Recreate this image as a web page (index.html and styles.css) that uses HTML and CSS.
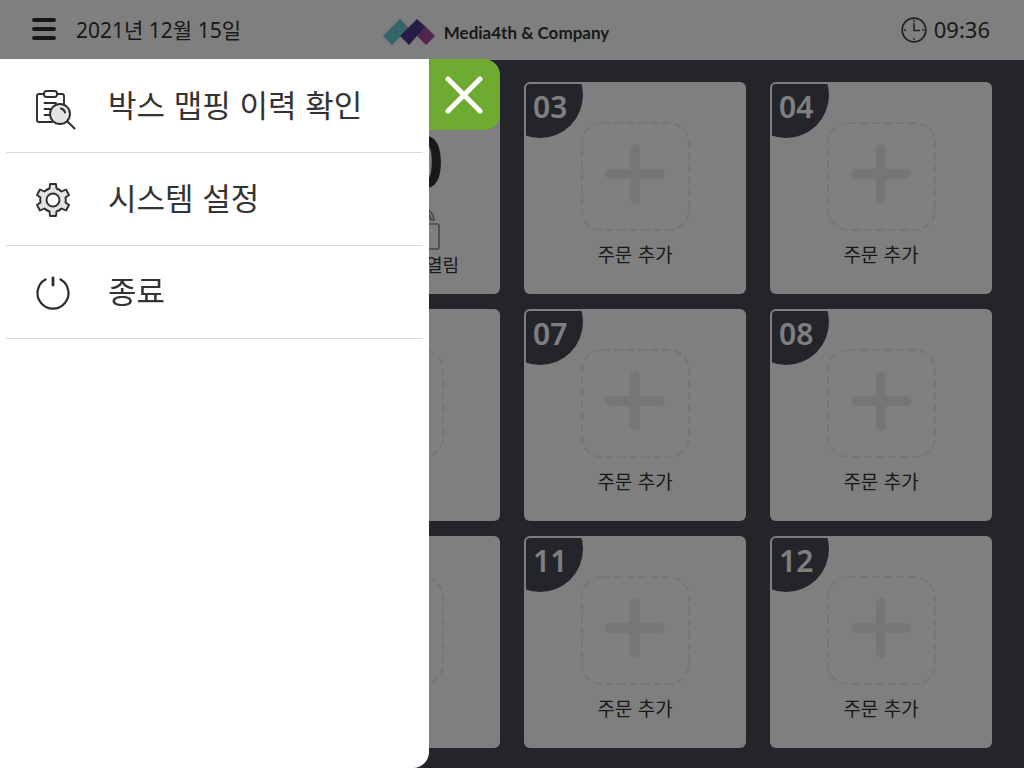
FILE: index.html
```html
<!DOCTYPE html>
<html lang="ko">
<head>
<meta charset="utf-8">
<meta name="viewport" content="width=device-width, initial-scale=1">
<title>Media4th &amp; Company</title>
<link rel="stylesheet" href="styles.css">
</head>
<body>
<svg class="symbols" aria-hidden="true">
  <symbol id="plus" viewBox="0 0 110 110">
    <rect x="2" y="1" width="107" height="107" rx="20" fill="none" stroke="#ebebeb" stroke-width="2" stroke-dasharray="8 4"/>
    <path d="M55 27v50M30 52h50" fill="none" stroke="#ededed" stroke-width="10" stroke-linecap="round"/>
  </symbol>
</svg>

<header class="topbar">
  <div class="topbar-left">
    <button class="menu-button" type="button" aria-label="메뉴">
      <svg width="24" height="22" viewBox="0 0 24 22"><path d="M2 2h20M2 11h20M2 20h20" stroke="#2f2f2f" stroke-width="4" stroke-linecap="round"/></svg>
    </button>
    <time class="date">2021년 12월 15일</time>
  </div>
  <div class="brand">
    <svg width="52" height="26" viewBox="0 0 52 26">
      <path d="M17 0L26 9L9 26L0 17Z" fill="#68ccd2"/>
      <path d="M43 8L52 17L43 26L34 17Z" fill="#a64a9c"/>
      <path d="M34 0L43 8L34 17L26 26L17 17Z" fill="#4e3790"/>
    </svg>
    <span>Media4th &amp; Company</span>
  </div>
  <div class="clock">
    <svg width="26" height="26" viewBox="0 0 26 26" fill="none" stroke="#444">
      <circle cx="13" cy="13" r="11.8" stroke-width="1.8"/>
      <path d="M13 6v7.500h6" stroke-width="1.600"/>
      <path d="M13 3v2M13 21v2M3 13h2M21 13h2" stroke-width="1.400"/>
    </svg>
    <time>09:36</time>
  </div>
</header>

<main class="boxes">
  <section class="card status second">
    <span class="count">0</span>
    <svg class="lock" width="44" height="42" viewBox="0 0 44 42" fill="none" stroke="#929292" stroke-width="1.700">
      <rect x="1" y="16" width="42" height="25" rx="2"/>
      <path d="M12 14A13 13 0 0 1 38 12H35A10 10 0 0 0 15 14"/>
    </svg>
    <span class="state">열림</span>
  </section>
  <section class="card"><span class="badge">03</span><button class="add" type="button"><svg><use href="#plus"/></svg>주문 추가</button></section>
  <section class="card"><span class="badge">04</span><button class="add" type="button"><svg><use href="#plus"/></svg>주문 추가</button></section>

  <section class="card second"><div class="add"><svg><use href="#plus"/></svg></div></section>
  <section class="card"><span class="badge">07</span><button class="add" type="button"><svg><use href="#plus"/></svg>주문 추가</button></section>
  <section class="card"><span class="badge">08</span><button class="add" type="button"><svg><use href="#plus"/></svg>주문 추가</button></section>

  <section class="card second"><div class="add"><svg><use href="#plus"/></svg></div></section>
  <section class="card"><span class="badge">11</span><button class="add" type="button"><svg><use href="#plus"/></svg>주문 추가</button></section>
  <section class="card"><span class="badge">12</span><button class="add" type="button"><svg><use href="#plus"/></svg>주문 추가</button></section>
</main>

<div class="backdrop"></div>

<aside class="drawer">
  <nav class="drawer-nav">
    <a class="item" href="#history">
      <svg width="40" height="40" viewBox="0 0 40 40" fill="none" stroke="#2e2e30" stroke-width="1.900" stroke-linecap="round" stroke-linejoin="round">
        <path d="M7.500 4H3Q1 4 1 6V30Q1 32 3 32H16M21 4H26Q28 4 28 6V14"/>
        <rect x="8" y="1" width="13" height="6" rx="2.500"/>
        <path d="M8.500 13H20M8.500 19H14M8.500 25H14"/>
        <circle cx="24" cy="24" r="10" fill="#e4e4e4"/>
        <path d="M25 18.500Q28.500 19.500 29 22.500" stroke-width="2"/>
        <path d="M31.500 31.500L38.500 38.500" stroke-width="2"/>
      </svg>
      <span>박스 맵핑 이력 확인</span>
    </a>
    <a class="item" href="#settings">
      <svg width="40" height="40" viewBox="0 3 40 40" fill="none" stroke="#2e2e30" stroke-width="1.900" stroke-linejoin="round">
        <path fill="#e4e4e4" fill-rule="evenodd" d="M14 4H20L20.500 8.500Q23.500 9.500 25.500 11.500L30 9.500L33 15L29.500 17.500Q30 20 29.500 22.500L33 25L30 30.500L25.500 28.500Q23.500 30.500 20.500 31.500L20 36H14L13.500 31.500Q10.500 30.500 8.500 28.500L4 30.500L1 25L4.500 22.500Q4 20 4.500 17.500L1 15L4 9.500L8.500 11.500Q10.500 9.500 13.500 8.500ZM23.500 20A6.500 6.500 0 1 0 10.500 20A6.500 6.500 0 1 0 23.500 20Z"/>
      </svg>
      <span>시스템 설정</span>
    </a>
    <a class="item" href="#exit">
      <svg width="40" height="40" viewBox="0 3 40 40" fill="none" stroke="#2c2c30" stroke-width="2.200" stroke-linecap="round">
        <path d="M9.500 6.500A15.500 15.500 0 1 0 24.500 6.500"/>
        <path d="M17 5V12" stroke-width="2.800"/>
      </svg>
      <span>종료</span>
    </a>
  </nav>
  <button class="close" type="button" aria-label="닫기">
    <svg width="38" height="38" viewBox="0 0 38 38"><path d="M3 3L35 35M35 3L3 35" stroke="#fff" stroke-width="5" stroke-linecap="round"/></svg>
  </button>
</aside>
</body>
</html>
```
FILE: styles.css
```css
* {
  box-sizing: border-box;
}

body {
  margin: 0;
  min-height: 100vh;
  display: flex;
  flex-direction: column;
  background: #484a55;
  color: #333;
  font-family: "Noto Sans", "Noto Sans CJK KR", sans-serif;
}

button {
  padding: 0;
  border: 0;
  background: none;
  color: inherit;
  font: inherit;
}

svg {
  display: block;
  flex: none;
}

.symbols {
  position: absolute;
  width: 0;
  height: 0;
}

.topbar {
  display: grid;
  grid-template-columns: 1fr auto 1fr;
  align-items: center;
  height: 60px;
  padding: 0 34px 0 32px;
  background: #fff;
}

.topbar-left,
.brand,
.clock {
  display: flex;
  align-items: center;
}

.topbar-left {
  gap: 20px;
  padding-bottom: 2px;
  font-size: 21px;
}

.brand {
  gap: 9px;
  margin-right: 30px;
  padding-top: 4px;
  font-family: Lato, sans-serif;
  font-size: 17px;
  font-weight: 700;
}

.clock {
  justify-content: flex-end;
  gap: 7px;
  font-size: 22px;
}

.clock time {
  padding-bottom: 2px;
}

.boxes {
  flex: 1;
  display: grid;
  grid-template-columns: repeat(4, 1fr);
  grid-template-rows: repeat(3, 1fr);
  gap: 15px 24px;
  padding: 22px 32px 20px;
}

.card {
  position: relative;
  display: flex;
  flex-direction: column;
  align-items: center;
  min-height: 212px;
  padding-top: 40px;
  border-radius: 6px;
  background: #fff;
}

.second {
  grid-column-start: 2;
}

.badge {
  position: absolute;
  top: 2px;
  left: 2px;
  width: 57px;
  height: 54px;
  padding-left: 7px;
  border-radius: 4px 0 0 0;
  background: #484a55;
  clip-path: circle(43px at 14px 11px);
  color: #fff;
  font-size: 30px;
  font-weight: 600;
  line-height: 46px;
}

.add {
  display: flex;
  flex-direction: column;
  align-items: center;
  gap: 8px;
  font-family: "Noto Sans CJK KR", sans-serif;
  font-size: 19px;
  line-height: 28px;
}

.add svg {
  width: 110px;
  height: 110px;
}

.status {
  align-items: flex-end;
  padding-top: 34px;
}

.count {
  margin-right: 56px;
  font-size: 72px;
  font-weight: 600;
  line-height: 88px;
}

.lock {
  margin: 4px 60px 0 0;
}

.state {
  margin-right: 41px;
  font-family: "Noto Sans CJK KR", sans-serif;
  font-size: 18px;
  line-height: 28px;
}

.backdrop {
  position: fixed;
  inset: 0;
  background: rgba(0, 0, 0, 0.5);
}

.drawer {
  position: fixed;
  top: 59px;
  bottom: 0;
  left: 0;
  display: flex;
  align-items: flex-start;
}

.drawer-nav {
  width: 429px;
  height: 100%;
  padding: 1px 6px 0;
  border-radius: 0 0 16px 0;
  background: #fff;
}

.item {
  display: flex;
  align-items: center;
  gap: 32px;
  height: 93px;
  padding-left: 30px;
  border-bottom: 1px solid #d9d9d9;
  color: #333;
  font-family: "Noto Sans CJK KR", sans-serif;
  font-size: 31px;
  line-height: 40px;
  text-decoration: none;
}

.item svg {
  margin-top: 8px;
}

.item span {
  padding-bottom: 4px;
}

.close {
  display: grid;
  place-items: center;
  width: 71px;
  height: 71px;
  padding-right: 2px;
  border-radius: 0 16px 16px 0;
  background: #6eac31;
}
```
